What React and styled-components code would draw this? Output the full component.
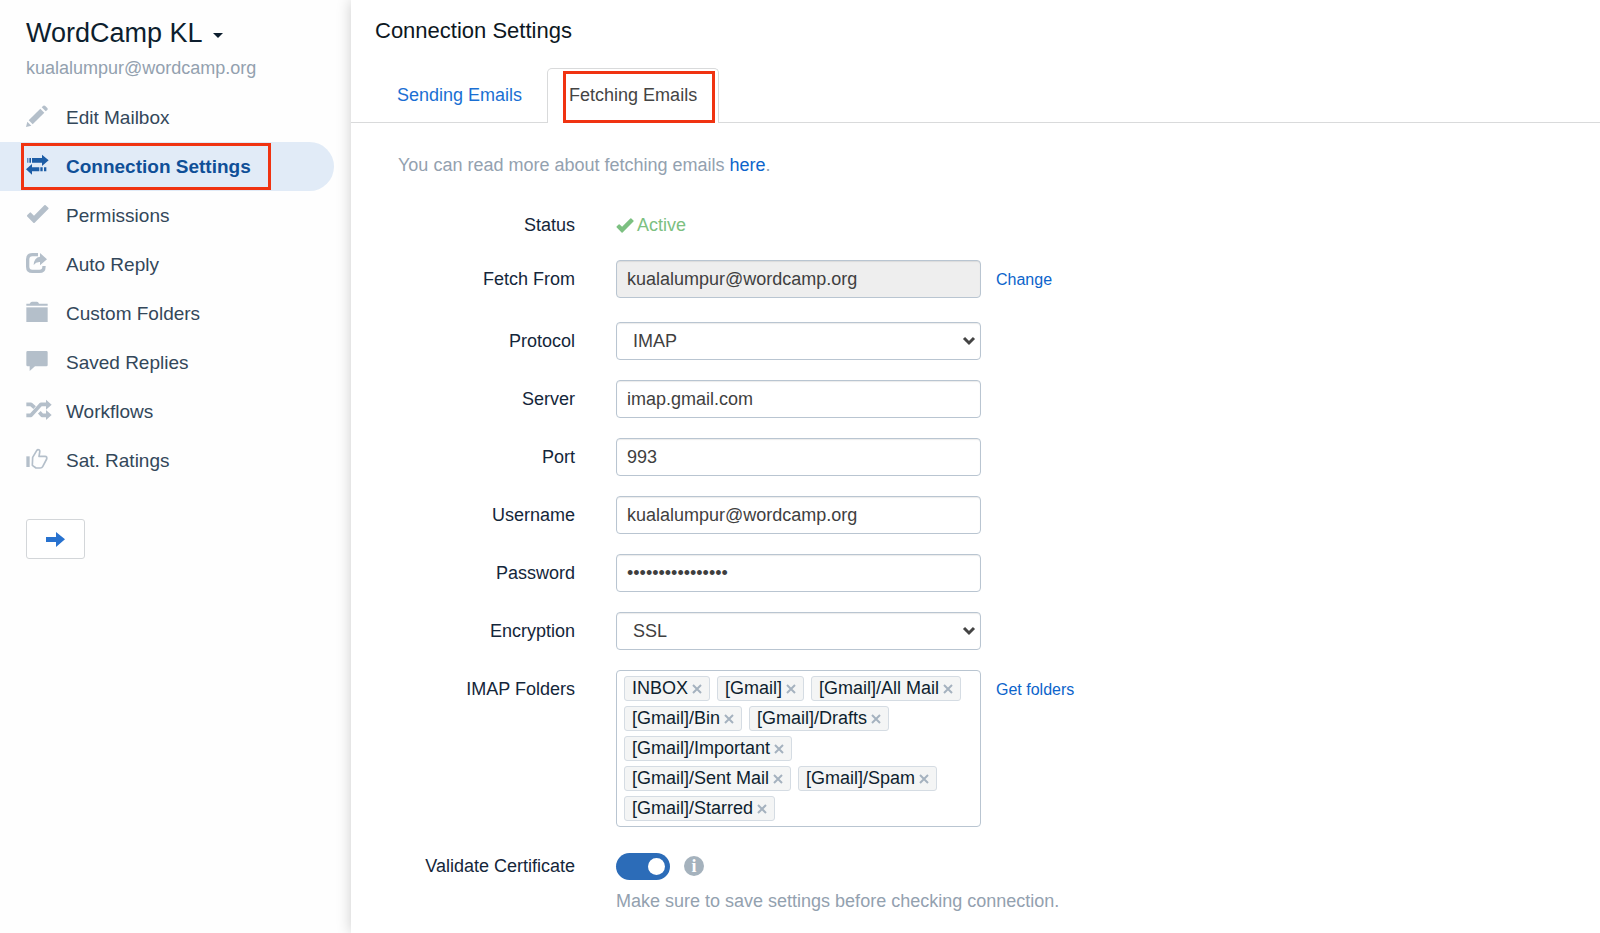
import React, { useState } from 'react';
import styled, { createGlobalStyle, css } from 'styled-components';

const GlobalStyle = createGlobalStyle`
  *, *::before, *::after { box-sizing: border-box; }
  body {
    margin: 0;
    background: #fff;
    color: #14263a;
    font-family: "Liberation Sans", Arial, sans-serif;
    font-size: 18px;
    line-height: 26px;
  }
  button, input, select { font-family: inherit; }
`;

const Layout = styled.div`
  display: flex;
  min-height: 100vh;
`;

const Sidebar = styled.aside`
  flex: 0 0 351px;
  padding-top: 17px;
  background: #fefefe;
`;

const MailboxButton = styled.button`
  display: flex;
  align-items: center;
  gap: 10px;
  margin: 0 26px;
  padding: 0;
  border: 0;
  background: none;
  color: #0d1e2e;
  font-size: 27px;
  line-height: 32px;
  cursor: pointer;
`;

const Caret = styled.span`
  margin-top: 4px;
  border: 5px solid transparent;
  border-top-color: currentColor;
  border-bottom: 0;
`;

const MailboxEmail = styled.p`
  margin: 7px 26px 13px;
  color: #93a1af;
  line-height: 24px;
`;

const NavList = styled.ul`
  margin: 0 17px 34px 0;
  padding: 0;
  list-style: none;
`;

const NavItem = styled.li`
  position: relative;
`;

const NavLink = styled.a`
  display: flex;
  align-items: center;
  height: 49px;
  padding-left: 26px;
  border-radius: 0 25px 25px 0;
  color: #33475a;
  font-size: 19px;
  text-decoration: none;
  ${({ $active }) =>
    $active &&
    css`
      background: #e1ebf7;
      color: #0f4f97;
      font-weight: bold;
    `}
`;

const NavIcon = styled.svg`
  flex: none;
  width: 26px;
  height: 22px;
  margin: 0 14px 4px 0;
  fill: currentColor;
  stroke: none;
  color: ${({ $active }) => ($active ? '#1d5da6' : '#b4bfca')};
`;

const Highlight = styled.span`
  position: absolute;
  top: ${({ $top }) => $top}px;
  right: ${({ $right }) => $right}px;
  bottom: ${({ $bottom }) => $bottom}px;
  left: ${({ $left }) => $left}px;
  border: 3px solid #f03311;
  pointer-events: none;
`;

const NextButton = styled.button`
  display: flex;
  align-items: center;
  justify-content: center;
  width: 59px;
  height: 40px;
  margin-left: 26px;
  padding: 0;
  border: 1px solid #d3d6d9;
  border-radius: 3px;
  background: #fff;
  color: #2872cf;
  cursor: pointer;
`;

const Main = styled.main`
  flex: 1;
  min-width: 0;
  padding-top: 16px;
  background: #fff;
  box-shadow: 0 0 14px rgba(0, 0, 0, 0.2);
`;

const PageTitle = styled.h1`
  margin: 0 24px 22px;
  font-size: 22px;
  font-weight: normal;
  line-height: 30px;
  color: #0d1722;
`;

const Tabs = styled.nav`
  display: flex;
  gap: 3px;
  padding-left: 24px;
  border-bottom: 1px solid #d9dadb;
`;

const Tab = styled.a`
  position: relative;
  margin-bottom: -1px;
  padding: 13px 21px 15px;
  border: 1px solid transparent;
  border-bottom: 0;
  border-radius: 5px 5px 0 0;
  color: #1a6fd3;
  text-decoration: none;
  ${({ $active }) =>
    $active &&
    css`
      border-color: #d9dadb;
      background: #fff;
      color: #444;
    `}
`;

const Intro = styled.p`
  margin: 29px 47px 34px;
  color: #93a1af;
`;

const Link = styled.a`
  color: #0c64cb;
  text-decoration: none;
`;

const SideLink = styled(Link)`
  margin-left: 15px;
  font-size: 16px;
  line-height: 40px;
`;

const Row = styled.div`
  display: grid;
  grid-template-columns: 265px minmax(0, 365px) auto;
  justify-content: start;
  align-items: start;
  margin-bottom: ${({ $gap = 20 }) => $gap}px;
  line-height: ${({ $line = 38 }) => $line}px;
`;

const Label = styled.label`
  padding-right: 41px;
  text-align: right;
`;

const Status = styled.span`
  display: flex;
  align-items: center;
  gap: 3px;
  color: #7cc081;
`;

const field = css`
  display: block;
  width: 100%;
  height: 38px;
  border: 1px solid #b9c5d1;
  border-radius: 4px;
  background: #fff;
  box-shadow: inset 0 1px 1px rgba(0, 0, 0, 0.08);
  color: #3f3f3f;
  font-size: 18px;
`;

const Input = styled.input`
  ${field}
  padding: 0 10px;
  &:disabled { background: #eee; }
`;

const SelectWrap = styled.span`
  position: relative;
  display: block;
`;

const Select = styled.select`
  ${field}
  padding: 0 36px 0 16px;
  appearance: none;
`;

const SelectArrow = styled.svg`
  position: absolute;
  top: 14px;
  right: 5px;
  width: 14px;
  height: 10px;
  fill: none;
  stroke: #444;
  stroke-width: 3;
  pointer-events: none;
`;

const TagBox = styled.div`
  display: flex;
  flex-wrap: wrap;
  gap: 5px 7px;
  padding: 5px 15px 5px 7px;
  border: 1px solid #b9c5d1;
  border-radius: 4px;
  line-height: 23px;
`;

const Tag = styled.span`
  display: flex;
  align-items: center;
  gap: 4px;
  height: 25px;
  padding: 0 7px;
  border: 1px solid #d5dce3;
  border-radius: 3px;
  background: #f4f5f5;
  color: #0d1e2e;
`;

const RemoveButton = styled.button`
  display: flex;
  padding: 0;
  border: 0;
  background: none;
  color: #a5b2bf;
  cursor: pointer;
`;

const SwitchLine = styled.div`
  display: flex;
  align-items: center;
  gap: 14px;
  height: 38px;
`;

const Switch = styled.input`
  appearance: none;
  display: flex;
  align-items: center;
  width: 54px;
  height: 27px;
  margin: 0;
  padding: 0 5px;
  border-radius: 14px;
  background: #b4bfca;
  cursor: pointer;
  &::before {
    content: "";
    width: 17px;
    height: 17px;
    border-radius: 50%;
    background: #fff;
  }
  &:checked {
    justify-content: flex-end;
    background: #2c6cb8;
  }
`;

const InfoButton = styled.button`
  width: 20px;
  height: 20px;
  padding: 0;
  border: 0;
  border-radius: 50%;
  background: #a5b2bd;
  color: #fff;
  font: bold 18px/20px "Liberation Serif", serif;
`;

const Hint = styled.p`
  margin: 3px 0 0;
  color: #93a1af;
  line-height: 26px;
  white-space: nowrap;
`;

const CheckShape = () => (
  <path d="M2 35 Q1 33 3 31 L10 24 Q12 22 14 24 L23 33 L54 2 Q56 0 58 2 L66 9 Q68 11 66 13 L25 54 Q23 56 21 54 Z" />
);

const icons = {
  pencil: (
    <>
      <path d="M0 66 L4 50 L16 62 Z" />
      <path d="M8 46 L43 11 L55 23 L20 58 Z" />
      <path d="M47 7 L52 2 Q55 0 58 3 L64 9 Q67 12 64 15 L59 19 Z" />
    </>
  ),
  transfer: (
    <>
      <path d="M4 12 H7 V26 H4 Z M10 12 H15 V26 H10 Z M18 12 H48 V2 L68 19 L48 36 V26 H18 Z" />
      <path d="M0 46 L18 30 V40 H40 V52 H18 V62 Z M43 40 H50 V52 H43 Z M54 40 H61 V52 H54 Z" />
    </>
  ),
  check: <g transform="translate(1 5)"><CheckShape /></g>,
  share: (
    <g transform="translate(0 3)">
      <path d="M36 5 H19 Q5 5 5 19 V41 Q5 55 19 55 H40 Q54 55 54 41 V39" fill="none" stroke="currentColor" strokeWidth="10" />
      <path d="M42 0 L63 19 L42 37 V27 Q30 26 23 36 Q24 13 42 11 Z" />
    </g>
  ),
  folder: (
    <g transform="translate(1 2)">
      <path d="M0 12 V6 H10 Q13 0 17 0 H32 Q36 0 38 6 H64 V12 Z" />
      <path d="M0 17 H64 V61 H0 Z" />
    </g>
  ),
  comment: (
    <path transform="translate(1 3)" d="M4 0 H60 Q64 0 64 4 V42 Q64 46 60 46 H26 L10 60 V46 H4 Q0 46 0 42 V4 Q0 0 4 0 Z" />
  ),
  shuffle: (
    <g transform="translate(1 2)">
      <path d="M0 14 H14 L25 24 M0 47 H14 L44 14 H60 M39 38 L47 47 H60" fill="none" stroke="currentColor" strokeWidth="11" strokeLinejoin="round" />
      <path d="M59 0 L76 15 L59 30 Z M59 31 L76 46 L59 61 Z" />
    </g>
  ),
  thumb: (
    <g transform="translate(1 2)">
      <path d="M0 23 H10 V55 H0 Z" />
      <path d="M19 26 L31 6 Q34 1 39 4 Q41 6 40 11 L38 23 H56 Q63 23 61 31 L49 54 Q47 58 42 58 H29 L18 50 Z" fill="none" stroke="currentColor" strokeWidth="5" strokeLinejoin="round" />
    </g>
  ),
};

const navItems = [
  ['Edit Mailbox', 'pencil'],
  ['Connection Settings', 'transfer'],
  ['Permissions', 'check'],
  ['Auto Reply', 'share'],
  ['Custom Folders', 'folder'],
  ['Saved Replies', 'comment'],
  ['Workflows', 'shuffle'],
  ['Sat. Ratings', 'thumb'],
];

const initialFolders = [
  'INBOX',
  '[Gmail]',
  '[Gmail]/All Mail',
  '[Gmail]/Bin',
  '[Gmail]/Drafts',
  '[Gmail]/Important',
  '[Gmail]/Sent Mail',
  '[Gmail]/Spam',
  '[Gmail]/Starred',
];

function InputRow({ id, label, gap, children, ...input }) {
  return (
    <Row $gap={gap}>
      <Label htmlFor={id}>{label}</Label>
      <Input id={id} {...input} />
      {children}
    </Row>
  );
}

function SelectRow({ id, label, options }) {
  return (
    <Row>
      <Label htmlFor={id}>{label}</Label>
      <SelectWrap>
        <Select id={id} defaultValue={options[0]}>
          {options.map((o) => <option key={o}>{o}</option>)}
        </Select>
        <SelectArrow viewBox="0 0 14 10" aria-hidden="true">
          <path d="M2 2 L7 7 L12 2" />
        </SelectArrow>
      </SelectWrap>
    </Row>
  );
}

export default function App() {
  const [folders, setFolders] = useState(initialFolders);
  return (
    <>
      <GlobalStyle />
      <Layout>
        <Sidebar>
          <MailboxButton type="button">WordCamp KL<Caret /></MailboxButton>
          <MailboxEmail>kualalumpur@wordcamp.org</MailboxEmail>
          <NavList>
            {navItems.map(([text, icon]) => {
              const active = icon === 'transfer';
              return (
                <NavItem key={text}>
                  <NavLink href="#" $active={active}>
                    <NavIcon viewBox="0 0 78 66" $active={active} aria-hidden="true">{icons[icon]}</NavIcon>
                    {text}
                  </NavLink>
                  {active && <Highlight $top={1} $right={63} $bottom={1} $left={21} />}
                </NavItem>
              );
            })}
          </NavList>
          <NextButton type="button" aria-label="Next">
            <svg width="19" height="15" viewBox="0 0 57 45" fill="currentColor" aria-hidden="true">
              <path d="M0 15 H30 V0 L57 22 L30 45 V30 H0 Z" />
            </svg>
          </NextButton>
        </Sidebar>
        <Main>
          <PageTitle>Connection Settings</PageTitle>
          <Tabs>
            <Tab href="#">Sending Emails</Tab>
            <Tab href="#" $active>
              Fetching Emails
              <Highlight $top={2} $right={3} $bottom={0} $left={15} />
            </Tab>
          </Tabs>
          <Intro>You can read more about fetching emails <Link href="#">here</Link>.</Intro>
          <form>
            <Row $line={26} $gap={22}>
              <Label as="span">Status</Label>
              <Status>
                <svg width="18" height="15" viewBox="0 0 68 56" fill="currentColor" aria-hidden="true"><CheckShape /></svg>
                Active
              </Status>
            </Row>
            <InputRow id="from" label="Fetch From" gap={22} defaultValue="kualalumpur@wordcamp.org" disabled>
              <SideLink href="#">Change</SideLink>
            </InputRow>
            <SelectRow id="protocol" label="Protocol" options={['IMAP', 'POP3']} />
            <InputRow id="server" label="Server" defaultValue="imap.gmail.com" />
            <InputRow id="port" label="Port" defaultValue="993" />
            <InputRow id="username" label="Username" defaultValue="kualalumpur@wordcamp.org" />
            <InputRow id="password" label="Password" type="password" autoComplete="off" defaultValue="abcdefghijklmnop" />
            <SelectRow id="encryption" label="Encryption" options={['SSL', 'TLS', 'None']} />
            <Row>
              <Label as="span" id="folders">IMAP Folders</Label>
              <TagBox role="group" aria-labelledby="folders">
                {folders.map((name) => (
                  <Tag key={name}>
                    {name}
                    <RemoveButton
                      type="button"
                      aria-label={`Remove ${name}`}
                      onClick={() => setFolders(folders.filter((f) => f !== name))}
                    >
                      <svg width="10" height="10" viewBox="0 0 10 10" stroke="currentColor" strokeWidth="2" aria-hidden="true">
                        <path d="M1 1 L9 9 M9 1 L1 9" />
                      </svg>
                    </RemoveButton>
                  </Tag>
                ))}
              </TagBox>
              <SideLink href="#">Get folders</SideLink>
            </Row>
            <Row $gap={0}>
              <Label htmlFor="validate">Validate Certificate</Label>
              <div>
                <SwitchLine>
                  <Switch id="validate" type="checkbox" role="switch" defaultChecked />
                  <InfoButton type="button">i</InfoButton>
                </SwitchLine>
                <Hint>Make sure to save settings before checking connection.</Hint>
              </div>
            </Row>
          </form>
        </Main>
      </Layout>
    </>
  );
}
